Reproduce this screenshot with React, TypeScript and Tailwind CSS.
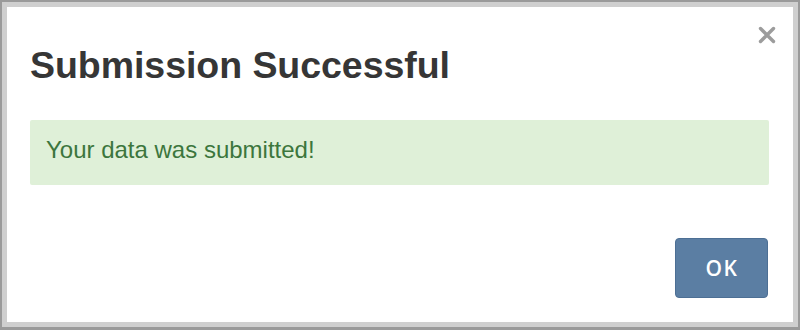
import React from "react";

export default function App() {
  return (
    <div className="w-[800px] h-[330px] bg-[#9a9a9a] pt-[2px] pl-[2px] pr-[2px] pb-[3px]">
      <div className="w-full h-full bg-[#cfcfcf] pt-[5px] pl-[5px] pr-[5px] pb-[5px]">
        <div className="relative w-full h-full bg-white pl-[23px] pr-[24px] pt-[38px] font-['Liberation_Sans',Arial,sans-serif]">
          <button className="absolute left-[751px] top-[19px] w-[18px] h-[18px] flex items-center justify-center">
            <svg width="18" height="18" viewBox="0 0 18 18">
              <path d="M2.5 2.5 L15.5 15.5 M15.5 2.5 L2.5 15.5" stroke="#9c9c9c" strokeWidth="3.4" strokeLinecap="round" />
            </svg>
          </button>
          <h1 className="text-[37.5px] leading-[1.1] font-bold text-[#363636] tracking-[-0.05px]">
            Submission Successful
          </h1>
          <div className="mt-[34px] h-[65px] bg-[#dff0d8] rounded-[2px] pl-[16px] pt-[17px]">
            <p className="text-[24px] leading-[1.1] text-[#3c763d]">Your data was submitted!</p>
          </div>
          <div className="flex justify-end mt-[53px] pr-[1px]">
            <button className="w-[93px] h-[60px] rounded-[4px] bg-[#5b7ea3] border border-[#4d6f94] text-white text-[21px] font-['Open_Sans',sans-serif] font-semibold tracking-[1.5px] flex items-center justify-center pl-[1px]">
              OK
            </button>
          </div>
        </div>
      </div>
    </div>
  );
}
